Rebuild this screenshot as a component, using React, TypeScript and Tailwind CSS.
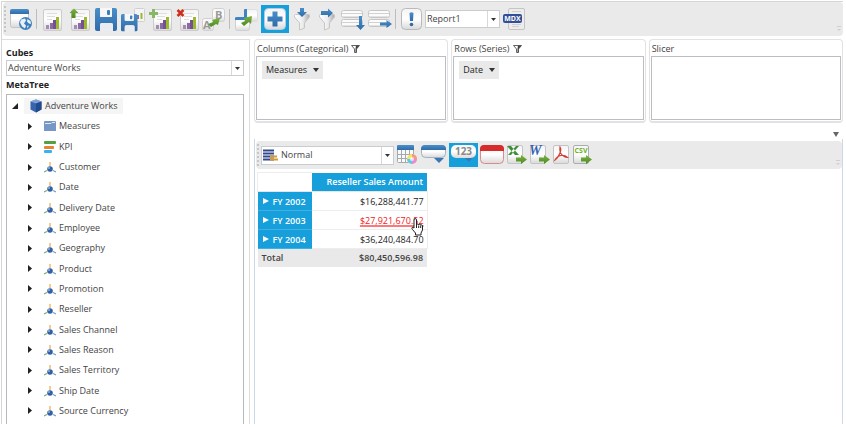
import type { ReactNode } from "react";

/* ---------- shared drawing parts ---------- */

function Art({ w, h = 28, children }: { w: number; h?: number; children: ReactNode }) {
  return (
    <svg width={w} height={h} viewBox={`0 0 ${w} ${h}`} fill="none" aria-hidden="true" className="block">
      {children}
    </svg>
  );
}

function Gradients() {
  return (
    <svg width="0" height="0" className="absolute" aria-hidden="true">
      <defs>
        <linearGradient id="paper" x1="0" y1="0" x2="0" y2="1">
          <stop offset="0" stopColor="#f4f4f4" />
          <stop offset="0.5" stopColor="#ffffff" />
          <stop offset="1" stopColor="#d9d9d9" />
        </linearGradient>
        <linearGradient id="blue" x1="0" y1="0" x2="0" y2="1">
          <stop offset="0" stopColor="#4a8fca" />
          <stop offset="1" stopColor="#2f6ba8" />
        </linearGradient>
        <linearGradient id="green" x1="0" y1="0" x2="0" y2="1">
          <stop offset="0" stopColor="#7cb342" />
          <stop offset="1" stopColor="#4c8a22" />
        </linearGradient>
        <linearGradient id="steel" x1="0" y1="0" x2="1" y2="0">
          <stop offset="0" stopColor="#ffffff" />
          <stop offset="0.55" stopColor="#ececec" />
          <stop offset="1" stopColor="#a9a9a9" />
        </linearGradient>
      </defs>
    </svg>
  );
}

function ChartPage({ x, y }: { x: number; y: number }) {
  return (
    <g transform={`translate(${x} ${y})`}>
      <rect x="0.5" y="0.5" width="18" height="21" rx="1.5" fill="url(#paper)" stroke="#cccccc" />
      <path d="M4 4.500h10M4 7.500h8M4 10.500h5" stroke="#dedede" />
      <rect x="3" y="16" width="3" height="4" fill="#a58bb5" />
      <rect x="7" y="14" width="3" height="6" fill="#8c6aa3" />
      <rect x="10" y="11" width="3" height="9" fill="#75518f" />
      <rect x="13" y="8" width="3" height="12" fill="#9bb92d" />
    </g>
  );
}

function Floppy({ x, y, s }: { x: number; y: number; s: number }) {
  return (
    <g transform={`translate(${x} ${y}) scale(${s})`}>
      <path d="M2 0h3v8q0 1 1 1h10q1 0 1-1V0h3q2 0 2 2v19q0 2-2 2h-2v-6q0-2-2-2H7q-2 0-2 2v6H2q-2 0-2-2V2q0-2 2-2z" fill="url(#blue)" />
      <path d="M5 0h12v8q0 1-1 1H6q-1 0-1-1z" fill="#f6f7f9" />
      <rect x="12" y="2" width="3" height="5" rx="1" fill="#3d7fbb" />
      <path d="M7 15h9q2 0 2 2v6H5v-6q0-2 2-2z" fill="#e9edf1" />
    </g>
  );
}

function Funnel({ x }: { x: number }) {
  return (
    <path
      transform={`translate(${x} 9)`}
      d="M0.500 1.500q0-1 1-1h13q1 0 1 1v1.500L10.500 9v5l-5 2V9L0.500 3z"
      fill="url(#steel)"
      stroke="#c6c6c6"
    />
  );
}

function GreenArrow({ x, y }: { x: number; y: number }) {
  return <path transform={`translate(${x} ${y})`} d="M0 2.500h5V0l6 4.500L5 9V6.500H0z" fill="url(#green)" />;
}

function Slabs() {
  return (
    <g fill="#fbfbfb" stroke="#c6c6c6">
      <rect x="2.500" y="5.500" width="21" height="7" rx="2" />
      <rect x="2.500" y="14.500" width="21" height="7" rx="2" />
      <path d="M3 8.500h20M3 17.500h20" stroke="#d2d2d2" />
      <path d="M4 11.500h18M4 20.500h18" stroke="#e2e2e2" />
    </g>
  );
}

/* ---------- report toolbar icons ---------- */

const NewReport = () => (
  <Art w={27}>
    <rect x="2.500" y="4.500" width="18" height="18" rx="2" fill="url(#paper)" stroke="#c4c4c4" />
    <path d="M4 4h15q2 0 2 2v3H2V6q0-2 2-2z" fill="url(#blue)" />
    <circle cx="17.500" cy="18.500" r="6.500" fill="#3f7fbb" />
    <path d="M13 14.500l4-1 1 2-2 3 2 2-1 3-3-2-2-4zM19.500 14l3 2 .5 3-2-.5-2-2zM19 21l2-.5-1.500 3z" fill="#e8f1f8" />
  </Art>
);
const ChartIcon = () => (
  <Art w={27}>
    <ChartPage x={5} y={4} />
  </Art>
);
const ChartUp = () => (
  <Art w={27}>
    <ChartPage x={6} y={4} />
    <path d="M4.500 8L9 3.500 13.500 8h-3v5h-4V8z" fill="url(#green)" />
  </Art>
);
const Save = () => (
  <Art w={27}>
    <Floppy x={3} y={3} s={1} />
  </Art>
);
const SaveChart = () => (
  <Art w={27}>
    <rect x="15.500" y="3.500" width="10" height="13" rx="1" fill="#f4f4f4" stroke="#d0d0d0" />
    <path d="M19 10v4" stroke="#8c6aa3" strokeWidth="2" />
    <path d="M22.500 8v6" stroke="#9bb92d" strokeWidth="2" />
    <Floppy x={2} y={9} s={0.75} />
  </Art>
);
const ChartAdd = () => (
  <Art w={27}>
    <ChartPage x={7} y={4} />
    <path d="M6 4h3v3h3v3H9v3H6v-3H3V7h3z" fill="#86b866" />
  </Art>
);
const ChartRemove = () => (
  <Art w={27}>
    <ChartPage x={7} y={4} />
    <path d="M4.500 5l6 6M10.500 5l-6 6" stroke="#cf2e1c" strokeWidth="2.500" />
  </Art>
);
const Rename = () => (
  <Art w={27}>
    <rect x="12.500" y="3.500" width="12" height="13" rx="2" fill="url(#paper)" stroke="#d0d0d0" />
    <rect x="2.500" y="13.500" width="11" height="12" rx="2" fill="url(#paper)" stroke="#d0d0d0" />
    <text x="15" y="14" fontSize="11" fontWeight="700" fill="#9a9a9a" fontFamily="Open Sans, sans-serif">B</text>
    <text x="3" y="24" fontSize="11" fontWeight="700" fill="#9a9a9a" fontFamily="Open Sans, sans-serif">A</text>
    <path d="M8 19l5-2-1-2 8-2-2 7-2-1-5 3z" fill="url(#green)" />
  </Art>
);
const Toggle = () => (
  <Art w={27}>
    <rect x="13.500" y="4.500" width="12" height="12" rx="2" fill="url(#paper)" stroke="#dedede" />
    <path d="M15 4h-2q-1 0-1 1v9h3z" fill="#3f83c0" />
    <rect x="3.500" y="12.500" width="14" height="13" rx="2" fill="url(#paper)" stroke="#d0d0d0" />
    <path d="M5 12h11q2 0 2 1v2H3v-2q0-1 2-1z" fill="#3f83c0" />
    <path d="M9 18l4-2-1-3 8-2-1 8-2-2-5 4z" fill="url(#green)" />
  </Art>
);
const PlusTile = () => (
  <Art w={28}>
    <rect x="3.500" y="3.500" width="21" height="21" rx="4" fill="url(#paper)" stroke="#b7cddb" />
    <path d="M11.500 6.500h5v5h5v5h-5v5h-5v-5h-5v-5h5z" fill="url(#blue)" />
  </Art>
);
const FunnelDown = () => (
  <Art w={25}>
    <Funnel x={5} />
    <path d="M11 3h4v4h3l-5 5-5-5h3z" fill="url(#blue)" />
  </Art>
);
const FunnelRight = () => (
  <Art w={25}>
    <Funnel x={5} />
    <path d="M7 6h7V3.500l5 4.500-5 4.500V10H7z" fill="url(#blue)" />
  </Art>
);
const SlabsDown = () => (
  <Art w={27}>
    <Slabs />
    <path d="M20 11h3v9h3l-4.500 5-4.500-5h3z" fill="url(#blue)" />
  </Art>
);
const SlabsRight = () => (
  <Art w={27}>
    <Slabs />
    <path d="M14 17.500h6.500V15l5.500 4-5.500 4v-2.500H14z" fill="url(#blue)" />
  </Art>
);
const Alert = () => (
  <Art w={27}>
    <rect x="3.500" y="3.500" width="20" height="21" rx="4" fill="url(#paper)" stroke="#b9b9b9" />
    <path d="M11.500 8q2-1.500 4 0l-.5 8h-3z" fill="url(#blue)" />
    <circle cx="13.500" cy="19.500" r="1.800" fill="#2f6ba8" />
  </Art>
);
const Mdx = () => (
  <Art w={27}>
    <rect x="8.500" y="3.500" width="16" height="21" rx="1.500" fill="#ececec" stroke="#c4c4c4" />
    <path d="M12 6.500h9M12 19.500h9M12 21.500h7" stroke="#cfcfcf" />
    <rect x="3" y="9" width="19" height="9" rx="2" fill="#314e96" />
    <text x="12.500" y="16" fontSize="7" fontWeight="700" textAnchor="middle" fill="#fff" fontFamily="Open Sans, sans-serif">MDX</text>
  </Art>
);

/* ---------- grid toolbar icons ---------- */

const FormatGrid = () => (
  <Art w={26} h={24}>
    <rect x="3.500" y="3.500" width="16" height="16" rx="1" fill="#fafafa" stroke="#a4a9ae" />
    <path d="M3 11.500h17M3 15.500h17M7.500 7v12M11.500 7v12M15.500 7v12" stroke="#a4a9ae" />
    <path d="M4 2h15q1 0 1 1v4H3V3q0-1 1-1z" fill="url(#blue)" />
    <circle cx="18" cy="16" r="5" fill="#f6e36a" />
    <path d="M18 16v-5a5 5 0 0 1 5 5z" fill="#f39a80" />
    <path d="M18 16h5a5 5 0 0 1-5 5z" fill="#e58ad8" />
    <path d="M18 16v5a5 5 0 0 1-5-5z" fill="#5fc6ee" />
    <circle cx="18" cy="16" r="2" fill="#fff" fillOpacity="0.7" />
  </Art>
);
const Callout = () => (
  <Art w={29} h={24}>
    <rect x="1.500" y="2.500" width="24" height="12" rx="4" fill="url(#paper)" stroke="#9fb3c4" />
    <path d="M5 2h17q4 0 4 4v1H1V6q0-4 4-4z" fill="url(#blue)" />
    <path d="M14 15h10l-5 5z" fill="#3a78b4" />
  </Art>
);
const Numbers = () => (
  <Art w={29} h={24}>
    <path d="M15 14h9l-4 5z" fill="#3a78b4" />
    <rect x="2" y="2" width="25" height="13" rx="5" fill="url(#paper)" />
    <text x="14.500" y="12" fontSize="10" fontWeight="700" textAnchor="middle" fill="#8a8a8a" fontFamily="Open Sans, sans-serif">123</text>
  </Art>
);
const RedPanel = () => (
  <Art w={27} h={24}>
    <rect x="2.500" y="2.500" width="23" height="18" rx="4" fill="url(#paper)" stroke="#d98a8a" />
    <path d="M6 2h16q4 0 4 4v2H2V6q0-4 4-4z" fill="#d62c2c" />
  </Art>
);
const Sheet = () => <rect x="2.500" y="2.500" width="15" height="18" rx="1.500" fill="url(#paper)" stroke="#c4c4c4" />;
const Excel = () => (
  <Art w={23} h={24}>
    <Sheet />
    <path d="M2 3h4l8 9h-4zM14 3h-3L3 12h3z" fill="#3f8f3a" />
    <GreenArrow x={11} y={12} />
  </Art>
);
const Word = () => (
  <Art w={23} h={24}>
    <Sheet />
    <text x="1" y="12" fontSize="14" fontWeight="700" fontStyle="italic" fill="#3563b4" fontFamily="Liberation Serif, serif">W</text>
    <GreenArrow x={11} y={12} />
  </Art>
);
const Pdf = () => (
  <Art w={20} h={24}>
    <Sheet />
    <path d="M9 4q1.500 2 0 6-2 5-5 7 2-4 6-4.500 4-.5 6.500 2-4 0-7-4.500-1-3-.5-6z" stroke="#d23c34" strokeWidth="1.200" />
  </Art>
);
const Csv = () => (
  <Art w={24} h={24}>
    <rect x="2.500" y="2.500" width="15" height="18" rx="1.500" fill="url(#paper)" stroke="#a8adb2" />
    <text x="10" y="10" fontSize="7" fontWeight="700" textAnchor="middle" fill="#6eb318" fontFamily="Open Sans, sans-serif">CSV</text>
    <GreenArrow x={10} y={12} />
  </Art>
);

/* ---------- controls ---------- */

function ToolButton({ label, active, children }: { label: string; active?: boolean; children: ReactNode }) {
  return (
    <button type="button" aria-label={label} title={label} className={active ? "shrink-0 bg-[#169fdb]" : "shrink-0"}>
      {children}
    </button>
  );
}

const Grip = () => <span className="my-px mr-0.5 w-0 self-stretch border-l-2 border-dotted border-[#c6c6c6]" />;
const Divider = ({ wide }: { wide?: boolean }) => (
  <span className={wide ? "flex h-5 w-[5px] justify-center" : "flex h-5 w-[3px] justify-center"}>
    <span className="w-px bg-[#bdbdbd]" />
  </span>
);

function Picker({ id, value, label, className, icon }: { id: string; value: string; label?: string; className: string; icon?: ReactNode }) {
  return (
    <div className={`flex items-stretch border border-[#c9ccd0] bg-white ${className}`}>
      {icon}
      <select id={id} aria-label={label} defaultValue={value} className="min-w-0 flex-1 appearance-none bg-transparent px-px outline-none">
        <option>{value}</option>
      </select>
      <span className="pointer-events-none flex w-3 items-center justify-center border-l border-[#d5d8dc]">
        <svg width="5" height="3" viewBox="0 0 5 3" aria-hidden="true">
          <path d="M0 0h5L2.500 3z" fill="#333" />
        </svg>
      </span>
    </div>
  );
}

const Overflow = () => (
  <span className="ml-auto flex flex-col items-center gap-0.5 self-end pr-0.5 pb-0.5">
    <span className="h-px w-1 bg-[#cfcfcf]" />
    <svg width="4" height="2" viewBox="0 0 4 2" aria-hidden="true">
      <path d="M0 0h4L2 2z" fill="#cfcfcf" />
    </svg>
  </span>
);

/* ---------- cube tree ---------- */

const CubeIcon = () => (
  <svg width="12" height="14" viewBox="0 0 12 14" aria-hidden="true">
    <path d="M0.500 2.500L6 0.500l5.500 2v8L6 13.500l-5.500-3z" fill="#3665ad" />
    <path d="M0.500 2.500L6 0.500l5.500 2L6 4.500z" fill="#7ea3d8" />
    <path d="M6 4.500l5.500-2v8L6 13.500z" fill="#234b8b" />
  </svg>
);
const MeasuresIcon = () => (
  <svg width="12" height="10" viewBox="0 0 12 10" aria-hidden="true">
    <path d="M0 1q0-1 1-1h10q1 0 1 1v9H0z" fill="#7797c7" />
    <path d="M1 2.500h6l1-1h3" stroke="#dfe8f4" fill="none" />
  </svg>
);
const KpiIcon = () => (
  <svg width="12" height="12" viewBox="0 0 12 12" aria-hidden="true">
    <rect width="12" height="3" rx="1" fill="#55a045" />
    <rect y="5" width="10" height="3" rx="1" fill="#e58432" />
    <rect y="9" width="8" height="3" rx="1" fill="#33b5f1" />
  </svg>
);
const DimensionIcon = () => (
  <svg width="12" height="12" viewBox="0 0 12 12" aria-hidden="true">
    <path d="M6 1v4" stroke="#f0a848" strokeWidth="1.200" />
    <path d="M0 11l3-1.500" stroke="#7db069" strokeWidth="1.200" />
    <path d="M9 9.500l3 1.500" stroke="#7a9cc8" strokeWidth="1.200" />
    <circle cx="6" cy="8" r="2.800" fill="#3260a8" />
    <circle cx="5" cy="7" r="1" fill="#8fb0de" />
  </svg>
);

const members = [
  "Measures", "KPI", "Customer", "Date", "Delivery Date", "Employee", "Geography", "Product",
  "Promotion", "Reseller", "Sales Channel", "Sales Reason", "Sales Territory", "Ship Date", "Source Currency",
];

function memberIcon(name: string) {
  if (name === "Measures") return <MeasuresIcon />;
  if (name === "KPI") return <KpiIcon />;
  return <DimensionIcon />;
}

function MetaTree() {
  return (
    <ul aria-label="MetaTree" className="flex flex-1 flex-col border border-b-0 border-[#b4b8bf] bg-white pt-px pb-[3px] pl-[5px]">
      <li className="flex min-h-5 flex-1 items-center">
        <button type="button" aria-label="Collapse Adventure Works">
          <svg width="6" height="6" viewBox="0 0 6 6" aria-hidden="true">
            <path d="M6 0v6H0z" fill="#222" />
          </svg>
        </button>
        <span className="ml-1.5 flex h-4 items-center gap-[3px] bg-[#f5f5f5] pr-1.5 pl-1.5">
          <CubeIcon />
          Adventure Works
        </span>
      </li>
      {members.map((name) => (
        <li key={name} className="flex min-h-5 flex-1 items-center pl-4">
          <button type="button" aria-label={`Expand ${name}`}>
            <svg width="4" height="7" viewBox="0 0 4 7" aria-hidden="true">
              <path d="M0 0l4 3.500L0 7z" fill="#222" />
            </svg>
          </button>
          <span className="ml-3 flex items-center gap-[3px]">
            {memberIcon(name)}
            {name}
          </span>
        </li>
      ))}
    </ul>
  );
}

/* ---------- axis panels ---------- */

function Axis({ title, filter, chip }: { title: string; filter?: boolean; chip?: string }) {
  return (
    <section className="rounded-sm border border-b-2 border-[#e2e2e4] p-px">
      <h2 className="flex h-[15px] items-center gap-[3px] px-px">
        {title}
        {filter && (
          <svg width="9" height="8" viewBox="0 0 9 8" aria-hidden="true">
            <path d="M0.500 0.500h8L5.500 4v3.500h-2V4z" fill="#fff" stroke="#666" />
            <path d="M5 0.500h3.500L5.500 4v3.500H4.500V4z" fill="#444" />
          </svg>
        )}
      </h2>
      <div className="h-16 border border-[#bcbcc4] py-1 pl-[5px] text-[#222]">
        {chip && (
          <button type="button" className="flex h-[18px] items-center gap-1.5 bg-[#e9e9e9] px-1">
            {chip}
            <svg width="6" height="4" viewBox="0 0 6 4" aria-hidden="true">
              <path d="M0 0h6L3 4z" fill="#333" />
            </svg>
          </button>
        )}
      </div>
    </section>
  );
}

/* ---------- pivot grid ---------- */

const rows = [
  { year: "FY 2002", amount: "$16,288,441.77" },
  { year: "FY 2003", amount: "$27,921,670.52", hovered: true },
  { year: "FY 2004", amount: "$36,240,484.70" },
];

const HandCursor = () => (
  <svg width="12" height="18" viewBox="0 0 12 18" aria-hidden="true" className="absolute top-1/2 right-1 -mt-0.5">
    <path
      d="M3 10V2q0-1.500 1.200-1.500T5.500 2v5q0-1 1-1t1.200 1q0-.8 1-.8t1 1.200q0-.6.800-.6t1 1.200V12l-1.500 3v2H4.500v-2L1.500 11.500q-1-1.500-.5-2t2 .5zM5.500 7v3M7.700 7.500v2.500M9.700 8v2"
      fill="#fff"
      stroke="#222"
    />
  </svg>
);

function PivotGrid() {
  return (
    <table className="border-collapse self-start leading-[17px] text-[#222]">
      <thead>
        <tr className="h-[19px] border-b border-[#e6e6e6]">
          <td className="min-w-[54px] border-t border-l border-[#ededed]" />
          <th scope="col" className="bg-[#169fdb] py-0 pr-1 pl-[15px] text-right font-semibold text-white">Reseller Sales Amount</th>
        </tr>
      </thead>
      <tbody>
        {rows.map((row) => (
          <tr key={row.year} className="h-[19px]">
            <th scope="row" className="border-b border-[#3fb0e2] bg-[#169fdb] px-[5px] py-0 text-left font-semibold text-white">
              <button type="button" className="flex items-center gap-1 leading-[17px]">
                <svg width="6" height="6" viewBox="0 0 6 6" aria-hidden="true">
                  <path d="M0 0l6 3-6 3z" fill="#fff" />
                </svg>
                {row.year}
              </button>
            </th>
            <td className="relative border-r border-b border-[#ededed] py-0 pr-[3px] text-right">
              {row.hovered ? (
                <>
                  <a href="#drill" className="text-[#ee2222] underline decoration-[#f77] decoration-2 underline-offset-1 [text-decoration-skip-ink:none]">{row.amount}</a>
                  <HandCursor />
                </>
              ) : (
                row.amount
              )}
            </td>
          </tr>
        ))}
      </tbody>
      <tfoot>
        <tr className="h-[18px] bg-[#e9e9e9] font-semibold text-[#444]">
          <th scope="row" className="px-1 py-0 text-left font-semibold">Total</th>
          <td className="py-0 pr-1 text-right">$80,450,596.98</td>
        </tr>
      </tfoot>
    </table>
  );
}

const StyleSwatch = () => (
  <svg width="15" height="12" viewBox="0 0 15 12" aria-hidden="true" className="mr-0.5 ml-px shrink-0 self-center">
    <path d="M0 1.500h11M0 4.500h11M0 7.500h11M0 10.500h11" stroke="#34488c" strokeWidth="2" />
    <path d="M7 7.500h7M7 10.500h8" stroke="#d69a35" strokeWidth="2" />
  </svg>
);

/* ---------- page ---------- */

export default function App() {
  return (
    <div className="flex min-h-screen flex-col bg-white pt-px pr-[3px] pb-[3px] pl-px font-['Open_Sans','Noto_Sans',sans-serif] text-[9px] leading-3 text-[#444]">
      <Gradients />
      <div className="flex flex-1 flex-col border-t border-l border-[#d6d6d6]">
        <div role="toolbar" aria-label="Report" className="ml-px flex h-[34px] items-center rounded-sm bg-[#eaeaea] py-[3px] pl-px">
          <Grip />
          <ToolButton label="New report"><NewReport /></ToolButton>
          <Divider />
          <ToolButton label="Report"><ChartIcon /></ToolButton>
          <ToolButton label="Load report"><ChartUp /></ToolButton>
          <ToolButton label="Save"><Save /></ToolButton>
          <ToolButton label="Save as"><SaveChart /></ToolButton>
          <ToolButton label="Add report"><ChartAdd /></ToolButton>
          <ToolButton label="Remove report"><ChartRemove /></ToolButton>
          <ToolButton label="Rename report"><Rename /></ToolButton>
          <Divider wide />
          <ToolButton label="Toggle axes"><Toggle /></ToolButton>
          <span className="w-0.5" />
          <ToolButton label="Drill" active><PlusTile /></ToolButton>
          <ToolButton label="Filter columns"><FunnelDown /></ToolButton>
          <ToolButton label="Filter rows"><FunnelRight /></ToolButton>
          <ToolButton label="Sort columns"><SlabsDown /></ToolButton>
          <ToolButton label="Sort rows"><SlabsRight /></ToolButton>
          <Divider wide />
          <ToolButton label="Exceptions"><Alert /></ToolButton>
          <Picker id="report" label="Report name" value="Report1" className="h-[18px] w-[75px]" />
          <ToolButton label="MDX query"><Mdx /></ToolButton>
          <Overflow />
        </div>

        <div className="mt-[3px] flex flex-1 items-stretch gap-1">
          <aside className="flex w-[248px] shrink-0 flex-col border-t border-r border-[#dedede] pt-[7px] pr-[5px] pl-1">
            <label htmlFor="cubes" className="font-bold text-[#222]">Cubes</label>
            <Picker id="cubes" value="Adventure Works" className="mt-px h-4" />
            <h2 className="mt-[3px] mb-[3px] font-bold text-[#222]">MetaTree</h2>
            <MetaTree />
          </aside>

          <main className="flex min-w-0 flex-1 flex-col">
            <div className="grid grid-cols-3 gap-[3px]">
              <Axis title="Columns (Categorical)" filter chip="Measures" />
              <Axis title="Rows (Series)" filter chip="Date" />
              <Axis title="Slicer" />
            </div>
            <div className="flex h-4 items-center justify-end pt-1.5 pr-1">
              <button type="button" aria-label="Collapse panels">
                <svg width="6" height="5" viewBox="0 0 6 5" aria-hidden="true" className="block">
                  <path d="M0 0h6L3 5z" fill="#666" />
                </svg>
              </button>
            </div>
            <div className="flex flex-1 flex-col border-x border-[#c9d9e8] pt-0.5 pl-px">
              <div role="toolbar" aria-label="Grid" className="flex h-7 items-center rounded-sm bg-[#eaeaea] py-0.5 pl-px">
                <Grip />
                <Picker id="style" label="Grid style" value="Normal" className="h-[19px] w-[133px]" icon={<StyleSwatch />} />
                <ToolButton label="Format grid"><FormatGrid /></ToolButton>
                <ToolButton label="Header tooltip"><Callout /></ToolButton>
                <ToolButton label="Value tooltip" active><Numbers /></ToolButton>
                <ToolButton label="Freeze headers"><RedPanel /></ToolButton>
                <ToolButton label="Export to Excel"><Excel /></ToolButton>
                <ToolButton label="Export to Word"><Word /></ToolButton>
                <ToolButton label="Export to PDF"><Pdf /></ToolButton>
                <ToolButton label="Export to CSV"><Csv /></ToolButton>
                <Overflow />
              </div>
              <div className="flex pt-[3px] pl-px">
                <PivotGrid />
              </div>
            </div>
          </main>
        </div>
      </div>
    </div>
  );
}
